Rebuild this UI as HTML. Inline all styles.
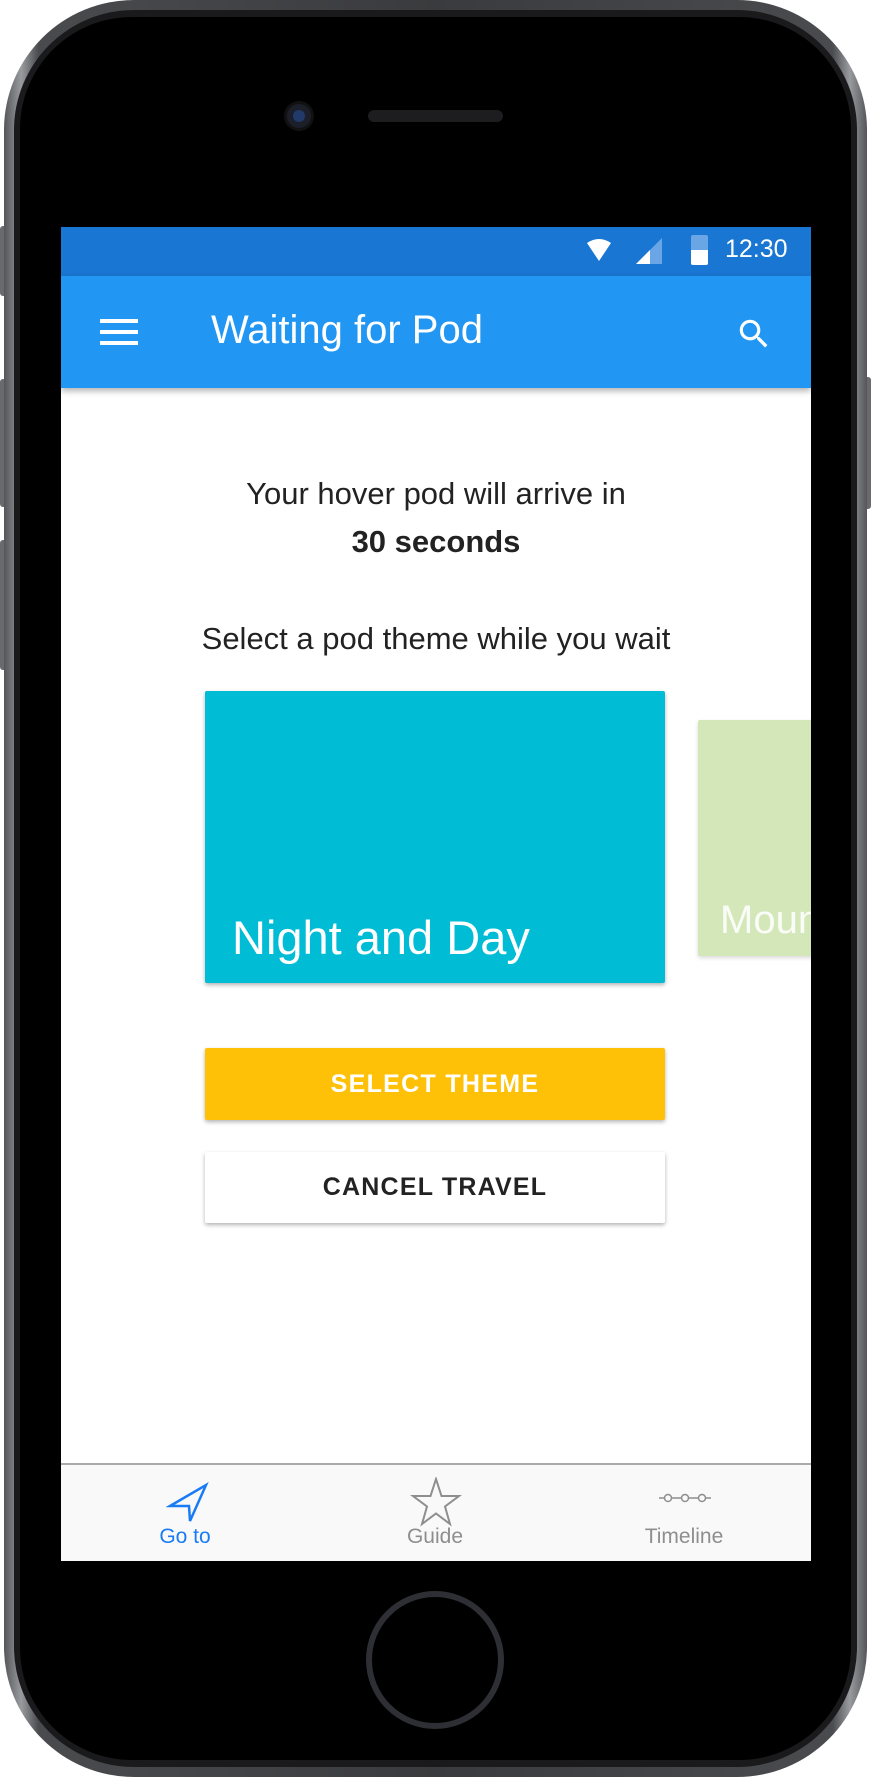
<!DOCTYPE html>
<html><head><meta charset="utf-8"><style>
*{margin:0;padding:0;box-sizing:border-box}
body{width:871px;height:1777px;background:#fff;position:relative;overflow:hidden;font-family:"Liberation Sans",Roboto,sans-serif}
.abs{position:absolute}
</style></head><body>
<div class="abs" style="left:0;top:226px;width:8px;height:70px;background:#6a6a6e;border-radius:3px"></div>
<div class="abs" style="left:0;top:379px;width:8px;height:128px;background:#6a6a6e;border-radius:3px"></div>
<div class="abs" style="left:0;top:540px;width:8px;height:130px;background:#6a6a6e;border-radius:3px"></div>
<div class="abs" style="right:0;top:377px;width:8px;height:132px;background:#6a6a6e;border-radius:3px"></div>
<div class="abs" style="left:4px;top:0;width:863px;height:1777px;border-radius:130px;background:linear-gradient(90deg,#55565a,#9a9b9f 2%,#4a4b4e 4%,#3a3b3e 50%,#4a4b4e 96%,#9a9b9f 98%,#55565a);"></div>
<div class="abs" style="left:14px;top:10px;width:843px;height:1757px;border-radius:120px;background:#1a1a1c"></div>
<div class="abs" style="left:20px;top:17px;width:831px;height:1743px;border-radius:112px;background:#000"></div>
<div class="abs" style="left:287px;top:104px;width:24px;height:24px;border-radius:50%;background:#1c1f2a;box-shadow:0 0 0 3px #111"></div>
<div class="abs" style="left:293px;top:110px;width:12px;height:12px;border-radius:50%;background:#223a6a"></div>
<div class="abs" style="left:368px;top:110px;width:135px;height:12px;border-radius:6px;background:#1d1d20"></div>
<div class="abs" style="left:366px;top:1591px;width:138px;height:138px;border-radius:50%;border:6px solid #2e2f34"></div>

<div class="abs" style="left:61px;top:227px;width:750px;height:1334px;background:#fff;overflow:hidden">
  <div class="abs" style="left:0;top:0;width:750px;height:49px;background:#1976d2"></div>
  <svg class="abs" style="left:524px;top:10px" width="28" height="28" viewBox="0 0 28 28"><path d="M2 6 Q14 -2 26 6 L14 24 Z" fill="#fff"/></svg>
  <svg class="abs" style="left:575px;top:11px" width="26" height="26"><path d="M0 26 L26 0 L26 26 Z" fill="#6aa5e6"/><path d="M0 26 L14 12 L14 26 Z" fill="#fff"/></svg>
  <div class="abs" style="left:630px;top:8px;width:17px;height:30px;background:#6aa5e6;border-radius:2px"></div>
  <div class="abs" style="left:630px;top:23px;width:17px;height:15px;background:#fff;border-radius:0 0 2px 2px"></div>
  <div class="abs" style="left:664px;top:8px;color:#fff;font-size:25px">12:30</div>
  <div class="abs" style="left:0;top:49px;width:750px;height:112px;background:#2196f3;box-shadow:0 3px 6px rgba(0,0,0,.3)"></div>
  <div class="abs" style="left:39px;top:92px;width:38px;height:4px;background:#fff"></div>
  <div class="abs" style="left:39px;top:103px;width:38px;height:4px;background:#fff"></div>
  <div class="abs" style="left:39px;top:114px;width:38px;height:4px;background:#fff"></div>
  <div class="abs" style="left:150px;top:81px;color:#fff;font-size:40px">Waiting for Pod</div>
  <svg class="abs" style="left:674px;top:88px" width="38" height="38" viewBox="0 0 24 24"><path fill="#fff" d="M15.5 14h-.79l-.28-.27A6.47 6.47 0 0 0 16 9.5 6.5 6.5 0 1 0 9.5 16c1.61 0 3.09-.59 4.23-1.57l.27.28v.79l5 4.99L20.49 19l-4.99-5zm-6 0C7.01 14 5 11.99 5 9.5S7.01 5 9.5 5 14 7.01 14 9.5 11.99 14 9.5 14z"/></svg>

  <div class="abs" style="left:0;top:249px;width:750px;text-align:center;color:#222;font-size:31px">Your hover pod will arrive in</div>
  <div class="abs" style="left:0;top:297px;width:750px;text-align:center;color:#222;font-size:31px;font-weight:bold">30 seconds</div>
  <div class="abs" style="left:0;top:394px;width:750px;text-align:center;color:#222;font-size:31px">Select a pod theme while you wait</div>

  <div class="abs" style="left:144px;top:464px;width:460px;height:292px;background:#00bcd4;border-radius:2px;box-shadow:0 2px 4px rgba(0,0,0,.3)"></div>
  <div class="abs" style="left:171px;top:683px;color:#fff;font-size:47px">Night and Day</div>
  <div class="abs" style="left:637px;top:493px;width:150px;height:236px;background:#d3e7b9;border-radius:2px;box-shadow:0 2px 4px rgba(0,0,0,.15)"></div>
  <div class="abs" style="left:659px;top:671px;color:#fff;font-size:40px;opacity:.9">Moun</div>

  <div class="abs" style="left:144px;top:821px;width:460px;height:72px;background:#ffc107;border-radius:2px;box-shadow:0 2px 4px rgba(0,0,0,.3);color:#fff;font-size:25px;letter-spacing:1.3px;text-align:center;line-height:72px;font-weight:bold">SELECT THEME</div>
  <div class="abs" style="left:144px;top:925px;width:460px;height:71px;background:#fff;border-radius:2px;box-shadow:0 2px 4px rgba(0,0,0,.3);color:#222;font-size:25px;letter-spacing:1.2px;text-align:center;line-height:71px;font-weight:bold">CANCEL TRAVEL</div>

  <div class="abs" style="left:0;top:1236px;width:750px;height:98px;background:#f9f9f9;border-top:2px solid #aaa"></div>
  <svg class="abs" style="left:105px;top:1254px" width="44" height="44" viewBox="0 0 44 44"><path d="M4 25 L40 4 L24 40 L23 25 Z" fill="none" stroke="#1a7cf5" stroke-width="2.5" stroke-linejoin="miter"/></svg>
  <div class="abs" style="left:74px;top:1298px;width:100px;text-align:center;color:#1a7cf5;font-size:21px">Go to</div>
  <svg class="abs" style="left:349px;top:1250px" width="52" height="50" viewBox="0 0 52 50"><path d="M26 2 L31.5 19 L49 19 L35 29.5 L40 47 L26 36.5 L12 47 L17 29.5 L3 19 L20.5 19 Z" fill="none" stroke="#8e8e8e" stroke-width="2"/></svg>
  <div class="abs" style="left:324px;top:1298px;width:100px;text-align:center;color:#8e8e8e;font-size:21px">Guide</div>
  <svg class="abs" style="left:598px;top:1263px" width="52" height="16" viewBox="0 0 52 16"><path d="M0 8 H52" stroke="#8e8e8e" stroke-width="1.5"/><circle cx="9" cy="8" r="3.5" fill="#f9f9f9" stroke="#8e8e8e" stroke-width="1.5"/><circle cx="26" cy="8" r="3.5" fill="#f9f9f9" stroke="#8e8e8e" stroke-width="1.5"/><circle cx="43" cy="8" r="3.5" fill="#f9f9f9" stroke="#8e8e8e" stroke-width="1.5"/></svg>
  <div class="abs" style="left:563px;top:1298px;width:120px;text-align:center;color:#8e8e8e;font-size:21px">Timeline</div>
</div>
</body></html>
